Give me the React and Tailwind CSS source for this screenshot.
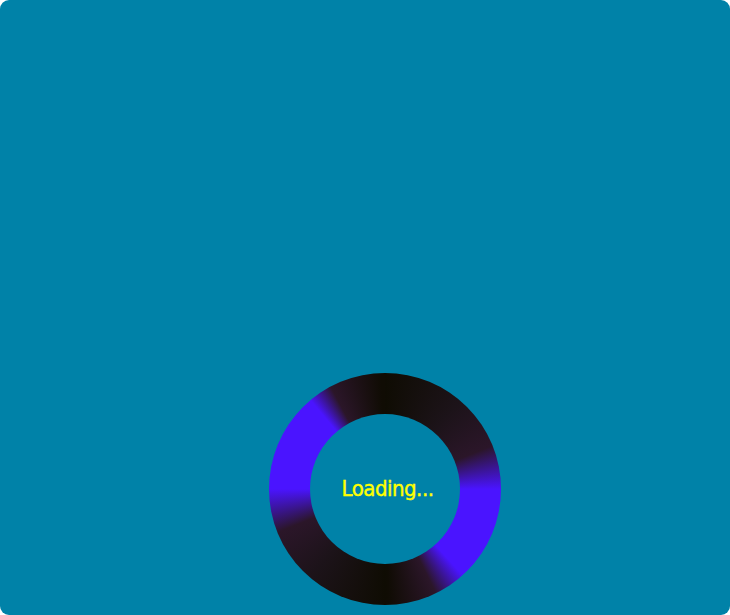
export default function App() {
  const ring =
    "conic-gradient(from 0deg, #0f0c03 0deg, #1c1319 40deg, #2b1629 68deg, #4a14ff 90deg, #4a14ff 138deg, #2b1629 154deg, #100c04 178deg, #0f0c03 180deg, #1c1319 220deg, #2b1629 248deg, #4a14ff 270deg, #4a14ff 320deg, #2b1629 332deg, #100c04 358deg)";

  return (
    <div className="w-[730px] h-[615px] bg-white">
      <div className="w-full h-full bg-[#0082a8] rounded-[9px] flex items-end justify-center pb-[10px]">
        <div
          className="ml-[40px] w-[232px] h-[232px] rounded-full flex items-center justify-center"
          style={{ background: ring }}
        >
          <div className="w-[150px] h-[150px] rounded-full bg-[#0082a8] flex items-center justify-center">
            <span className="font-['DejaVu_Sans_Condensed',sans-serif] text-[22px] tracking-[-0.5px] leading-none text-[#ffff00] ml-[5px] [-webkit-text-stroke:0.4px_#ffff00]">
              Loading...
            </span>
          </div>
        </div>
      </div>
    </div>
  );
}
